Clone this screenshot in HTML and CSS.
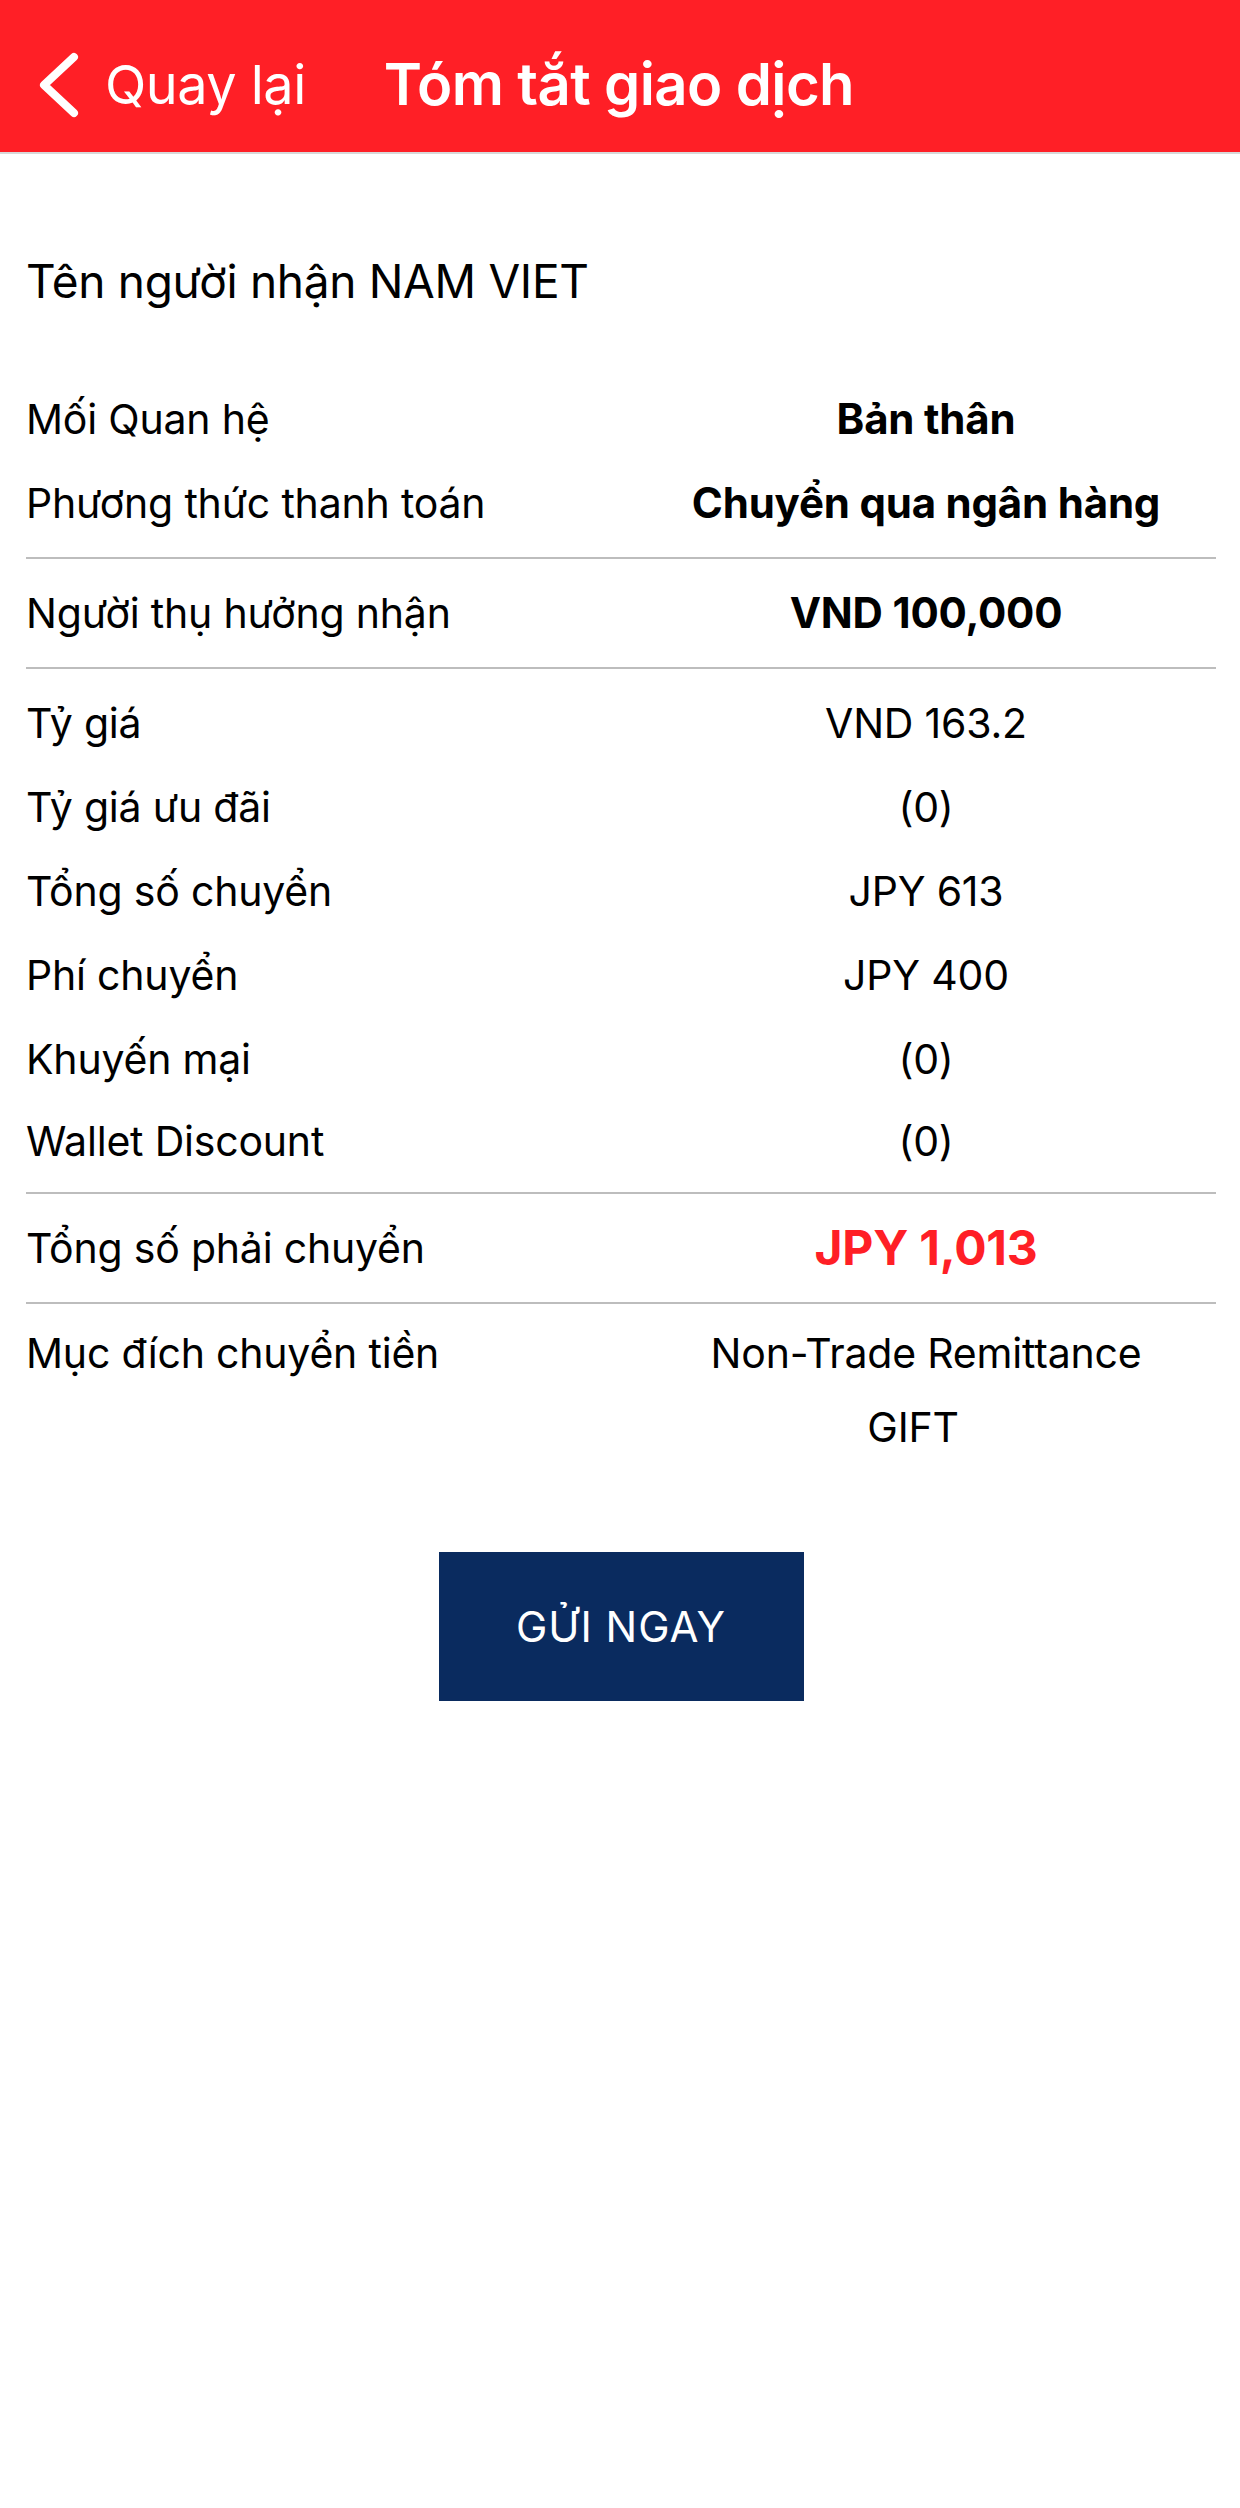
FILE: index.html
```html
<!DOCTYPE html>
<html lang="vi">
<head>
    <meta charset="utf-8" />
    <title>Tóm tắt giao dịch</title>
    <link rel="stylesheet" href="styles.css">
</head>
<body>
    <div class="topbar">
        <a class="back" href="#">
            <svg class="chevron" width="44" height="66" viewBox="0 0 44 66">
                <polyline points="37,5 7,33 37,61" fill="none" stroke="#fff" stroke-width="8" stroke-linecap="round" stroke-linejoin="round" />
            </svg>
            <span>Quay lại</span>
        </a>
        <h1 class="title">Tóm tắt giao dịch</h1>
    </div>

    <div class="summary">
        <div class="receiver">Tên người nhận NAM VIET</div>

        <div class="group first">
            <div class="row">
                <div class="label">Mối Quan hệ</div>
                <div class="value bold">Bản thân</div>
            </div>
            <div class="row">
                <div class="label">Phương thức thanh toán</div>
                <div class="value bold">Chuyển qua ngân hàng</div>
            </div>
        </div>

        <div class="group">
            <div class="row">
                <div class="label">Người thụ hưởng nhận</div>
                <div class="value bold">VND 100,000</div>
            </div>
        </div>

        <div class="group rates">
            <div class="row">
                <div class="label">Tỷ giá</div>
                <div class="value">VND 163.2</div>
            </div>
            <div class="row">
                <div class="label">Tỷ giá ưu đãi</div>
                <div class="value">(0)</div>
            </div>
            <div class="row">
                <div class="label">Tổng số chuyển</div>
                <div class="value">JPY 613</div>
            </div>
            <div class="row">
                <div class="label">Phí chuyển</div>
                <div class="value">JPY 400</div>
            </div>
            <div class="row">
                <div class="label">Khuyến mại</div>
                <div class="value">(0)</div>
            </div>
            <div class="row short">
                <div class="label">Wallet Discount</div>
                <div class="value">(0)</div>
            </div>
        </div>

        <div class="group">
            <div class="row">
                <div class="label">Tổng số phải chuyển</div>
                <div class="value total">JPY 1,013</div>
            </div>
        </div>

        <div class="group last">
            <div class="row purpose">
                <div class="label">Mục đích chuyển tiền</div>
                <div class="value">
                    <div>Non-Trade Remittance</div>
                    <div class="sub">GIFT</div>
                </div>
            </div>
        </div>

        <div class="actions">
            <button class="send">GỬI NGAY</button>
        </div>
    </div>
</body>
</html>
```

FILE: styles.css
```css
body {
    margin: 0;
    background: #fff;
    font-family: Inter, "Liberation Sans", Arial, sans-serif;
    color: #000;
}

.topbar {
    height: 154px;
    box-sizing: border-box;
    padding-top: 18px;
    background: #ff1f26;
    border-bottom: 2px solid #d8d8d8;
    display: flex;
    align-items: center;
    color: #fff;
}

.back {
    display: flex;
    align-items: center;
    color: #fff;
    text-decoration: none;
    margin-left: 37px;
    font-size: 54px;
    letter-spacing: -0.5px;
}

.back span {
    margin-left: 24px;
    margin-bottom: 2px;
}

.title {
    margin: 0 0 2px 78px;
    font-size: 58px;
    font-weight: 600;
    letter-spacing: -0.6px;
}

.summary {
    padding: 0 24px 0 26px;
}

.receiver {
    margin-top: 97px;
    line-height: 60px;
    font-size: 46px;
    letter-spacing: -0.3px;
}

.group {
    padding: 12px 0;
    border-bottom: 2px solid #bdbdbd;
}

.group.first {
    margin-top: 54px;
}

.group.rates {
    padding-bottom: 11px;
}

.group.last {
    border-bottom: none;
    padding-top: 12px;
}

.row {
    display: grid;
    grid-template-columns: 610px 1fr;
    align-items: start;
    line-height: 84px;
    font-size: 41px;
    letter-spacing: -0.2px;
}

.row.short {
    line-height: 80px;
}

.value {
    text-align: center;
}

.bold {
    font-weight: 700;
    font-size: 42px;
}

.total {
    color: #ff1f26;
    font-weight: 700;
    font-size: 48px;
}

.purpose {
    line-height: 74px;
}

.purpose .sub {
    padding-right: 26px;
}

.actions {
    display: flex;
    justify-content: center;
    margin-top: 76px;
}

.send {
    width: 365px;
    height: 149px;
    background: #0a2b5f;
    color: #fff;
    border: none;
    font-family: Inter, "Liberation Sans", Arial, sans-serif;
    font-size: 42px;
    letter-spacing: 1px;
}
```
